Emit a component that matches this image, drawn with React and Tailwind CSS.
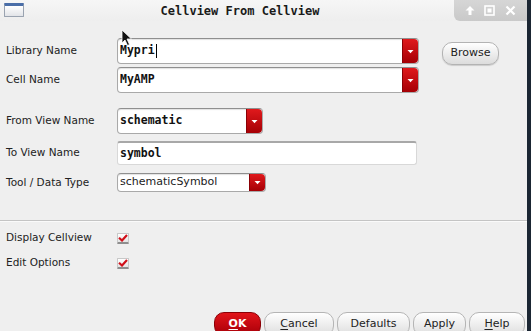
import React from "react";

const mono = { fontFamily: '"DejaVu Sans Mono", "Liberation Mono", monospace' };

function RedArrow({ h }) {
  return (
    <div className={`flex w-[16px] ${h} shrink-0 items-center justify-center rounded-r-[4px] bg-gradient-to-b from-[#e0191c] to-[#a50005] border-l border-[#8a0005]`}>
      <svg width="7" height="5" viewBox="0 0 7 5"><path d="M0.5 1 L6.5 1 L3.5 4.2 Z" fill="#fff" /></svg>
    </div>
  );
}

function Combo({ w, h, children, sans }) {
  return (
    <div className={`flex ${w} ${h} items-stretch rounded-[4px] border border-[#a9a9a9] border-t-[#8f8f8f] bg-white shadow-[inset_0_1px_1px_rgba(0,0,0,0.12)]`}>
      <div className={`flex flex-1 items-center pl-[2px] ${sans ? "text-[11px] text-[#222]" : "text-[11.5px] font-bold text-[#111]"}`} style={sans ? { fontFamily: '"DejaVu Sans", sans-serif' } : mono}>
        {children}
      </div>
      <RedArrow h="h-full" />
    </div>
  );
}

function Label({ children }) {
  return <div className="w-[117px] shrink-0 pl-[6px] text-[10.5px] text-[#222]" style={{ fontFamily: '"DejaVu Sans", sans-serif' }}>{children}</div>;
}

function Check() {
  return (
    <div className="flex h-[11px] w-[12px] items-center justify-center rounded-[1px] border border-[#c8c8c8] border-b-2 border-b-[#8e8e8e] bg-gradient-to-b from-[#ffffff] to-[#e4e4e4]">
      <svg width="10" height="8" viewBox="0 0 10 8"><path d="M1 3.8 L4 6.5 L9 1" stroke="#d0101a" strokeWidth="2.2" fill="none" /></svg>
    </div>
  );
}

function Btn({ w, children, red }) {
  return (
    <div className={`flex ${w} h-[24px] items-start justify-center rounded-[10px] pt-[3px] text-[11px] ${red ? "bg-gradient-to-b from-[#e2141a] to-[#a80008] border border-[#8c0006] text-white font-bold" : "bg-gradient-to-b from-[#ffffff] to-[#dedede] border border-[#b5b5b5] text-[#222]"}`} style={{ fontFamily: '"DejaVu Sans", sans-serif' }}>
      {children}
    </div>
  );
}

export default function App() {
  return (
    <div className="flex h-[331px] w-[531px] overflow-hidden bg-[#1b2633]">
      <div className="relative flex h-full w-[527px] flex-col bg-[#efefef]">
        {/* title bar */}
        <div className="flex h-[21px] shrink-0 items-stretch bg-gradient-to-b from-[#f6f6f6] to-[#eeeeee]">
          <div className="flex w-[26px] items-start pl-[4px] pt-[3px]">
            <div className="h-[14px] w-[20px] rounded-[1px] border border-[#9aa3b0] bg-gradient-to-b from-[#ffffff] to-[#e2e4e8] border-t-[3px] border-t-[#4a6ea8]" />
          </div>
          <div className="flex flex-1 items-center justify-center pt-[1px] text-[12px] font-bold text-[#1a1a1a]" style={mono}>Cellview From Cellview</div>
          <div className="flex w-[73px] items-center justify-around rounded-bl-[6px] bg-gradient-to-b from-[#d6d6d6] to-[#c9c9c9] px-[6px]">
            <svg width="10" height="11" viewBox="0 0 10 11"><path d="M5 1 L9.5 5.5 L6.5 5.5 L6.5 10 L3.5 10 L3.5 5.5 L0.5 5.5 Z" fill="#fff" /></svg>
            <svg width="11" height="11" viewBox="0 0 11 11"><rect x="1" y="1" width="9" height="9" stroke="#fff" strokeWidth="1.6" fill="none" /><rect x="3.5" y="3.5" width="4" height="4" fill="#fff" /></svg>
            <svg width="11" height="11" viewBox="0 0 11 11"><path d="M1.5 1.5 L9.5 9.5 M9.5 1.5 L1.5 9.5" stroke="#fff" strokeWidth="2.2" /></svg>
          </div>
        </div>

        {/* form */}
        <div className="mt-[16px] flex items-center">
          <Label>Library Name</Label>
          <Combo w="w-[302px]" h="h-[26px]">
            <span>Mypri</span><span className="ml-[1px] inline-block h-[14px] w-[1px] bg-black" />
          </Combo>
          <div className="ml-[23px] mt-[5px] flex h-[23px] w-[57px] items-center justify-center rounded-[10px] border border-[#b3b3b3] bg-gradient-to-b from-[#ffffff] to-[#dcdcdc] text-[11px] text-[#222] shadow-[0_1px_1px_rgba(0,0,0,0.15)]" style={{ fontFamily: '"DejaVu Sans", sans-serif' }}>Browse</div>
        </div>
        <div className="mt-[2px] flex items-center">
          <Label>Cell Name</Label>
          <Combo w="w-[302px]" h="h-[26px]">MyAMP</Combo>
        </div>
        <div className="mt-[15px] flex items-center">
          <Label>From View Name</Label>
          <Combo w="w-[146px]" h="h-[26px]">schematic</Combo>
        </div>
        <div className="mt-[7px] flex items-center">
          <Label>To View Name</Label>
          <div className="flex h-[24px] w-[300px] items-center rounded-[3px] border border-[#d8d8d8] border-t-2 border-t-[#a8a8a8] bg-white pl-[2px] text-[11.5px] font-bold text-[#111]" style={mono}>symbol</div>
        </div>
        <div className="mt-[8px] flex items-center">
          <Label>Tool / Data Type</Label>
          <Combo w="w-[149px]" h="h-[19px]" sans>schematicSymbol</Combo>
        </div>

        <div className="mt-[28px] h-[2px] w-full border-t border-[#c4c4c4] border-b border-b-[#fafafa]" />

        <div className="mt-[10px] flex h-[12px] items-center">
          <Label>Display Cellview</Label>
          <Check />
        </div>
        <div className="mt-[13px] flex h-[12px] items-center">
          <Label>Edit Options</Label>
          <Check />
        </div>

        <div className="mt-[43px] flex gap-[3px] pl-[214px]">
          <Btn w="w-[47px]" red><span className="underline underline-offset-2">O</span>K</Btn>
          <Btn w="w-[70px]"><span className="underline underline-offset-2">C</span>ancel</Btn>
          <Btn w="w-[73px]">Defaults</Btn>
          <Btn w="w-[53px]">Apply</Btn>
          <Btn w="w-[56px]"><span className="underline underline-offset-2">H</span>elp</Btn>
        </div>

        {/* mouse pointer */}
        <svg className="absolute left-[121px] top-[29px]" width="12" height="18" viewBox="0 0 12 18">
          <path d="M1 1 L1 14 L4 11 L6.5 16.5 L8.5 15.5 L6 10 L10.5 10 Z" fill="#111" stroke="#fff" strokeWidth="0.8" />
        </svg>
      </div>
    </div>
  );
}
